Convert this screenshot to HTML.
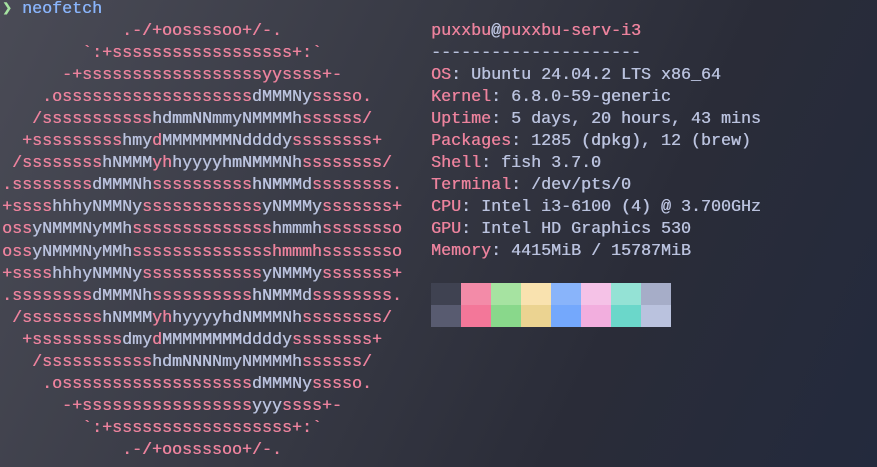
<!DOCTYPE html>
<html><head><meta charset="utf-8"><style>
html,body{margin:0;padding:0;width:877px;height:467px;overflow:hidden}
body{background:linear-gradient(115deg,#4a4b56 0%,#383a45 40%,#2a2c38 70%,#232a3d 100%);font-family:"Liberation Mono","DejaVu Sans Mono",monospace;font-size:16.67px;line-height:22.05px;color:#bac2de}
pre{margin:0;font:inherit;position:absolute;white-space:pre;text-shadow:0.4px 0 currentColor}
#l{left:2px;top:-1px}
#r{left:431px;top:21px}
.p{color:#ec829d}.w{color:#bac2de}
.g{color:#a6e3a1}.b{color:#89b4fa}
.sw{position:absolute;width:30px;height:22px}
</style></head><body>
<pre id="l"><span class="g">❯</span> <span class="b">neofetch</span>
<span class="p">            .-/+oossssoo+/-.
        `:+ssssssssssssssssss+:`
      -+ssssssssssssssssssyyssss+-
    .osssssssssssssssssss</span><span class="w">dMMMNy</span><span class="p">sssso.
   /sssssssssss</span><span class="w">hdmmNNmmyNMMMMh</span><span class="p">ssssss/
  +sssssssss</span><span class="w">hmy</span><span class="p">d</span><span class="w">MMMMMMMNddddy</span><span class="p">ssssssss+
 /ssssssss</span><span class="w">hNMMM</span><span class="p">yh</span><span class="w">hyyyyhmNMMMNh</span><span class="p">ssssssss/
.ssssssss</span><span class="w">dMMMNh</span><span class="p">ssssssssss</span><span class="w">hNMMMd</span><span class="p">ssssssss.
+ssss</span><span class="w">hhhyNMMNy</span><span class="p">ssssssssssss</span><span class="w">yNMMMy</span><span class="p">sssssss+
oss</span><span class="w">yNMMMNyMMh</span><span class="p">ssssssssssssss</span><span class="w">hmmmh</span><span class="p">ssssssso
oss</span><span class="w">yNMMMNyMMh</span><span class="p">sssssssssssssshmmmhssssssso
+ssss</span><span class="w">hhhyNMMNy</span><span class="p">ssssssssssss</span><span class="w">yNMMMy</span><span class="p">sssssss+
.ssssssss</span><span class="w">dMMMNh</span><span class="p">ssssssssss</span><span class="w">hNMMMd</span><span class="p">ssssssss.
 /ssssssss</span><span class="w">hNMMM</span><span class="p">yh</span><span class="w">hyyyyhdNMMMNh</span><span class="p">ssssssss/
  +sssssssss</span><span class="w">dmy</span><span class="p">d</span><span class="w">MMMMMMMMddddy</span><span class="p">ssssssss+
   /sssssssssss</span><span class="w">hdmNNNNmyNMMMMh</span><span class="p">ssssss/
    .osssssssssssssssssss</span><span class="w">dMMMNy</span><span class="p">sssso.
      -+sssssssssssssssss</span><span class="w">yyy</span><span class="p">ssss+-
        `:+ssssssssssssssssss+:`
            .-/+oossssoo+/-.</span></pre>
<pre id="r"><span class="p">puxxbu</span>@<span class="p">puxxbu-serv-i3</span>
---------------------
<span class="p">OS</span>: Ubuntu 24.04.2 LTS x86_64
<span class="p">Kernel</span>: 6.8.0-59-generic
<span class="p">Uptime</span>: 5 days, 20 hours, 43 mins
<span class="p">Packages</span>: 1285 (dpkg), 12 (brew)
<span class="p">Shell</span>: fish 3.7.0
<span class="p">Terminal</span>: /dev/pts/0
<span class="p">CPU</span>: Intel i3-6100 (4) @ 3.700GHz
<span class="p">GPU</span>: Intel HD Graphics 530
<span class="p">Memory</span>: 4415MiB / 15787MiB</pre>
<div class="sw" style="left:431px;top:283px;background:#3f4251"></div>
<div class="sw" style="left:461px;top:283px;background:#f38ba8"></div>
<div class="sw" style="left:491px;top:283px;background:#a6e3a1"></div>
<div class="sw" style="left:521px;top:283px;background:#f9e2af"></div>
<div class="sw" style="left:551px;top:283px;background:#89b4fa"></div>
<div class="sw" style="left:581px;top:283px;background:#f5c2e7"></div>
<div class="sw" style="left:611px;top:283px;background:#94e2d5"></div>
<div class="sw" style="left:641px;top:283px;background:#a6adc8"></div>
<div class="sw" style="left:431px;top:305px;background:#585b70"></div>
<div class="sw" style="left:461px;top:305px;background:#f37799"></div>
<div class="sw" style="left:491px;top:305px;background:#89d88b"></div>
<div class="sw" style="left:521px;top:305px;background:#ebd391"></div>
<div class="sw" style="left:551px;top:305px;background:#74a8fc"></div>
<div class="sw" style="left:581px;top:305px;background:#f2aede"></div>
<div class="sw" style="left:611px;top:305px;background:#6bd7ca"></div>
<div class="sw" style="left:641px;top:305px;background:#bac2de"></div>
</body></html>
